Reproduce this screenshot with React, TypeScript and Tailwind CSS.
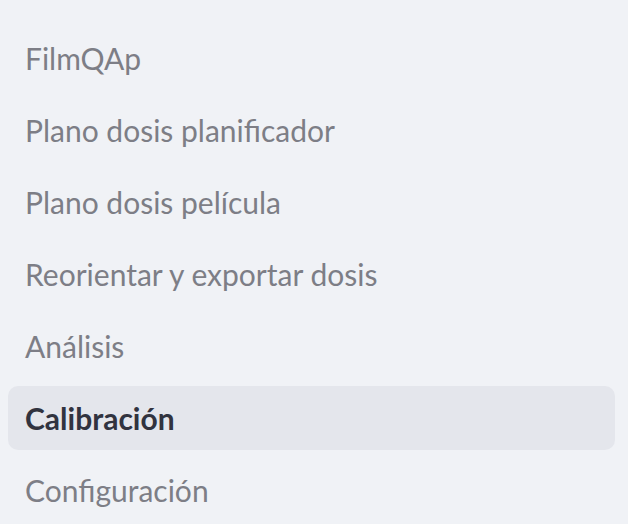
const items = [
  "FilmQAp",
  "Plano dosis planificador",
  "Plano dosis película",
  "Reorientar y exportar dosis",
  "Análisis",
  "Calibración",
  "Configuración",
];

const active = "Calibración";

export default function App() {
  return (
    <div className="w-[628px] h-[524px] bg-[#f0f2f6] overflow-hidden font-['Lato',sans-serif]">
      <nav className="flex flex-col gap-2 pt-[26px] pl-2 pr-[13px]">
        {items.map((label) => (
          <a
            key={label}
            className={
              label === active
                ? "h-16 flex items-center px-[17px] rounded-[10px] bg-[#e4e6ec] text-[#31333f] font-bold text-[30px]"
                : "h-16 flex items-center px-[17px] rounded-[10px] text-[#7d7e86] text-[30px]"
            }
          >
            {label}
          </a>
        ))}
      </nav>
    </div>
  );
}
